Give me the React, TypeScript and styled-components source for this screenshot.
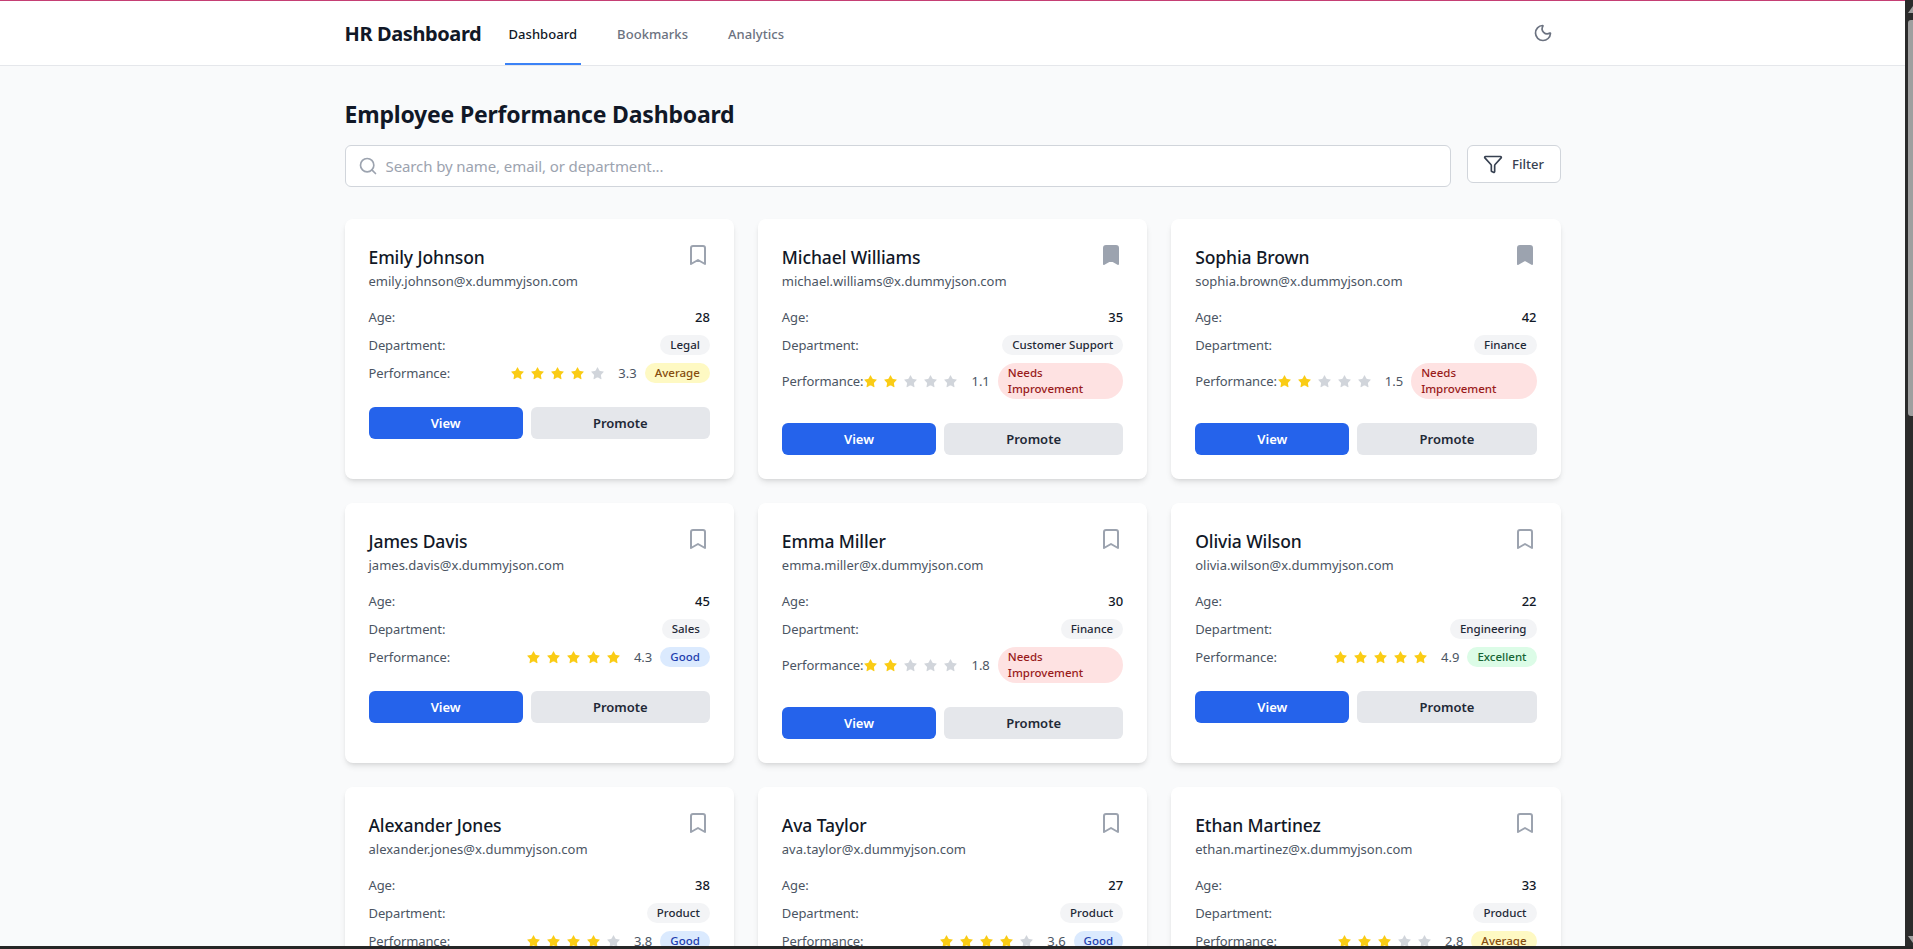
import { createGlobalStyle } from "styled-components";
import styled from "styled-components";
import { Search, Filter, Moon, Bookmark, Star } from "lucide-react";

const GlobalStyle = createGlobalStyle`
  * { box-sizing: border-box; }
  html, body { margin: 0; height: 100%; overflow: hidden; }
  body { font-family: "Noto Sans", "Open Sans", sans-serif; color: #111827; background: #f9fafb; }
  #root { height: 100%; }
`;

const Frame = styled.div`
  height: 100vh;
  display: flex;
  flex-direction: column;
  background: #262626;
`;

const Viewport = styled.div`
  flex: 1;
  min-height: 0;
  display: flex;
`;

const Page = styled.div`
  flex: 1;
  min-width: 0;
  overflow: hidden;
  background: #f9fafb;
  border-top: 1px solid #c53f74;
`;

const ScrollTrack = styled.div`
  width: 8px;
  flex: none;
  background: #2b2b2b;
  padding: 6px 0 3px 3px;
  display: flex;
  flex-direction: column;
`;

const ScrollArrow = styled.div<{ $down?: boolean }>`
  width: 5px;
  height: 7px;
  flex: none;
  background: #9f9f9f;
  clip-path: ${(p) =>
    p.$down ? "polygon(0 0, 100% 0, 100% 100%)" : "polygon(100% 0, 100% 100%, 0 100%)"};
`;

const ScrollThumb = styled.div`
  height: 396px;
  margin-top: 7px;
  background: #9f9f9f;
  border-radius: 3px 0 0 3px;
`;

const ScrollSpacer = styled.div`
  flex: 1;
`;

const BottomBar = styled.div`
  height: 3px;
  flex: none;
  background: #262626;
`;

const Header = styled.header`
  height: 65px;
  background: #fff;
  border-bottom: 1px solid #e5e7eb;
`;

const Container = styled.div`
  max-width: 1280px;
  margin: 0 auto;
  padding: 0 32px;
`;

const HeaderRow = styled(Container)`
  height: 100%;
  display: flex;
  align-items: center;
  justify-content: space-between;
`;

const HeaderLeft = styled.div`
  height: 100%;
  display: flex;
  align-items: center;
`;

const Brand = styled.div`
  font-size: 20px;
  font-weight: 700;
  letter-spacing: -0.4px;
  width: 160px;
  white-space: nowrap;
`;

const Tabs = styled.nav`
  height: 100%;
  display: flex;
  gap: 32px;
`;

const Tab = styled.a<{ $active?: boolean }>`
  height: 100%;
  display: flex;
  align-items: center;
  padding: 3px 4px 0;
  font-size: 13px;
  font-weight: 500;
  letter-spacing: 0.05px;
  color: ${(p) => (p.$active ? "#111827" : "#6b7280")};
  border-bottom: 2px solid ${(p) => (p.$active ? "#3b82f6" : "transparent")};
`;

const ThemeButton = styled.button`
  width: 36px;
  height: 36px;
  display: flex;
  align-items: center;
  justify-content: center;
  background: none;
  border: 0;
  padding: 0;
  color: #6b7280;
`;

const Main = styled(Container)`
  padding-top: 32px;
`;

const Title = styled.h1`
  margin: 0 0 15px;
  font-size: 23px;
  line-height: 32px;
  font-weight: 700;
  letter-spacing: -0.2px;
`;

const Toolbar = styled.div`
  display: flex;
  gap: 16px;
  margin-bottom: 32px;
  align-items: flex-start;
`;

const SearchBox = styled.div`
  flex: 1;
  height: 42px;
  display: flex;
  align-items: center;
  gap: 8px;
  padding: 0 12px;
  background: #fff;
  border: 1px solid #d1d5db;
  border-radius: 6px;
  color: #9ca3af;
  font-size: 15px;
  letter-spacing: -0.1px;
`;

const FilterButton = styled.button`
  width: 94px;
  height: 38px;
  display: flex;
  align-items: center;
  justify-content: center;
  gap: 9px;
  background: #fff;
  border: 1px solid #d1d5db;
  border-radius: 6px;
  color: #374151;
  font-family: inherit;
  font-size: 13px;
  font-weight: 500;
`;

const Grid = styled.div`
  display: grid;
  grid-template-columns: repeat(3, 1fr);
  gap: 24px;
`;

const Card = styled.article`
  background: #fff;
  border-radius: 8px;
  padding: 24px;
  box-shadow: 0 4px 6px -1px rgba(0, 0, 0, 0.1), 0 2px 4px -2px rgba(0, 0, 0, 0.1);
`;

const CardTop = styled.div`
  display: flex;
  justify-content: space-between;
  align-items: flex-start;
  margin-bottom: 16px;
`;

const Name = styled.h3`
  margin: 0;
  font-size: 17.5px;
  line-height: 28px;
  font-weight: 500;
  letter-spacing: -0.1px;
`;

const Email = styled.div`
  font-size: 13px;
  line-height: 20px;
  color: #4b5563;
`;

const BookmarkButton = styled.button`
  width: 24px;
  height: 24px;
  background: none;
  border: 0;
  padding: 0;
  color: #9ca3af;
  display: flex;
`;

const Rows = styled.div`
  display: flex;
  flex-direction: column;
  gap: 8px;
  margin-bottom: 16px;
`;

const Row = styled.div`
  display: flex;
  justify-content: space-between;
  align-items: center;
  font-size: 13px;
  line-height: 20px;
`;

const Label = styled.span`
  color: #4b5563;
  white-space: nowrap;
  letter-spacing: -0.1px;
`;

const Age = styled.span`
  font-weight: 500;
`;

const Pill = styled.span<{ $bg: string; $fg: string }>`
  display: inline-block;
  padding: 2px 10px;
  border-radius: 9999px;
  font-size: 11.5px;
  line-height: 16px;
  font-weight: 500;
  background: ${(p) => p.$bg};
  color: ${(p) => p.$fg};
`;

const Perf = styled.div`
  display: flex;
  align-items: center;
`;

const Stars = styled.div`
  display: flex;
  margin-right: 8px;
`;

const StarBox = styled.span<{ $on: boolean }>`
  width: 20px;
  height: 20px;
  display: flex;
  align-items: center;
  justify-content: flex-start;
  color: ${(p) => (p.$on ? "#facc15" : "#d1d5db")};
`;

const Score = styled.span`
  color: #4b5563;
  margin-right: 8px;
  font-size: 13px;
`;

const Actions = styled.div`
  display: flex;
  gap: 8px;
  margin-top: 24px;
`;

const ActionButton = styled.button<{ $primary?: boolean }>`
  height: 32px;
  border: 0;
  border-radius: 6px;
  font-family: inherit;
  font-size: 13px;
  font-weight: 600;
  flex: 1 1 auto;
  background: ${(p) => (p.$primary ? "#2563eb" : "#e5e7eb")};
  color: ${(p) => (p.$primary ? "#fff" : "#1f2937")};
`;

type Employee = {
  name: string;
  email: string;
  age: number;
  dept: string;
  score: number;
  stars: number;
  saved?: boolean;
};

const employees: Employee[] = [
  { name: "Emily Johnson", email: "emily.johnson@x.dummyjson.com", age: 28, dept: "Legal", score: 3.3, stars: 4 },
  { name: "Michael Williams", email: "michael.williams@x.dummyjson.com", age: 35, dept: "Customer Support", score: 1.1, stars: 2, saved: true },
  { name: "Sophia Brown", email: "sophia.brown@x.dummyjson.com", age: 42, dept: "Finance", score: 1.5, stars: 2, saved: true },
  { name: "James Davis", email: "james.davis@x.dummyjson.com", age: 45, dept: "Sales", score: 4.3, stars: 5 },
  { name: "Emma Miller", email: "emma.miller@x.dummyjson.com", age: 30, dept: "Finance", score: 1.8, stars: 2 },
  { name: "Olivia Wilson", email: "olivia.wilson@x.dummyjson.com", age: 22, dept: "Engineering", score: 4.9, stars: 5 },
  { name: "Alexander Jones", email: "alexander.jones@x.dummyjson.com", age: 38, dept: "Product", score: 3.8, stars: 4 },
  { name: "Ava Taylor", email: "ava.taylor@x.dummyjson.com", age: 27, dept: "Product", score: 3.6, stars: 4 },
  { name: "Ethan Martinez", email: "ethan.martinez@x.dummyjson.com", age: 33, dept: "Product", score: 2.8, stars: 3 },
];

function rating(score: number) {
  if (score >= 4.5) return { text: "Excellent", bg: "#dcfce7", fg: "#166534" };
  if (score >= 3.5) return { text: "Good", bg: "#dbeafe", fg: "#1e40af" };
  if (score >= 2) return { text: "Average", bg: "#fef9c3", fg: "#854d0e" };
  return { text: "Needs Improvement", bg: "#fee2e2", fg: "#991b1b" };
}

function EmployeeCard({ e }: { e: Employee }) {
  const r = rating(e.score);
  return (
    <Card>
      <CardTop>
        <div>
          <Name>{e.name}</Name>
          <Email>{e.email}</Email>
        </div>
        <BookmarkButton>
          <Bookmark size={24} strokeWidth={2} fill={e.saved ? "currentColor" : "none"} />
        </BookmarkButton>
      </CardTop>
      <Rows>
        <Row>
          <Label>Age:</Label>
          <Age>{e.age}</Age>
        </Row>
        <Row>
          <Label>Department:</Label>
          <Pill $bg="#f3f4f6" $fg="#1f2937">{e.dept}</Pill>
        </Row>
        <Row>
          <Label>Performance:</Label>
          <Perf>
            <Stars>
              {[0, 1, 2, 3, 4].map((i) => (
                <StarBox key={i} $on={i < e.stars}>
                  <Star size={15} fill="currentColor" strokeWidth={0} />
                </StarBox>
              ))}
            </Stars>
            <Score>{e.score}</Score>
            <Pill $bg={r.bg} $fg={r.fg}>{r.text}</Pill>
          </Perf>
        </Row>
      </Rows>
      <Actions>
        <ActionButton $primary>View</ActionButton>
        <ActionButton>Promote</ActionButton>
      </Actions>
    </Card>
  );
}

export default function App() {
  return (
    <Frame>
      <GlobalStyle />
      <Viewport>
        <Page>
          <Header>
            <HeaderRow>
              <HeaderLeft>
                <Brand>HR Dashboard</Brand>
                <Tabs>
                  <Tab $active>Dashboard</Tab>
                  <Tab>Bookmarks</Tab>
                  <Tab>Analytics</Tab>
                </Tabs>
              </HeaderLeft>
              <ThemeButton>
                <Moon size={20} />
              </ThemeButton>
            </HeaderRow>
          </Header>
          <Main>
            <Title>Employee Performance Dashboard</Title>
            <Toolbar>
              <SearchBox>
                <Search size={20} />
                Search by name, email, or department...
              </SearchBox>
              <FilterButton>
                <Filter size={20} />
                Filter
              </FilterButton>
            </Toolbar>
            <Grid>
              {employees.map((e) => (
                <EmployeeCard key={e.email} e={e} />
              ))}
            </Grid>
          </Main>
        </Page>
        <ScrollTrack>
          <ScrollArrow />
          <ScrollThumb />
          <ScrollSpacer />
          <ScrollArrow $down />
        </ScrollTrack>
      </Viewport>
      <BottomBar />
    </Frame>
  );
}
